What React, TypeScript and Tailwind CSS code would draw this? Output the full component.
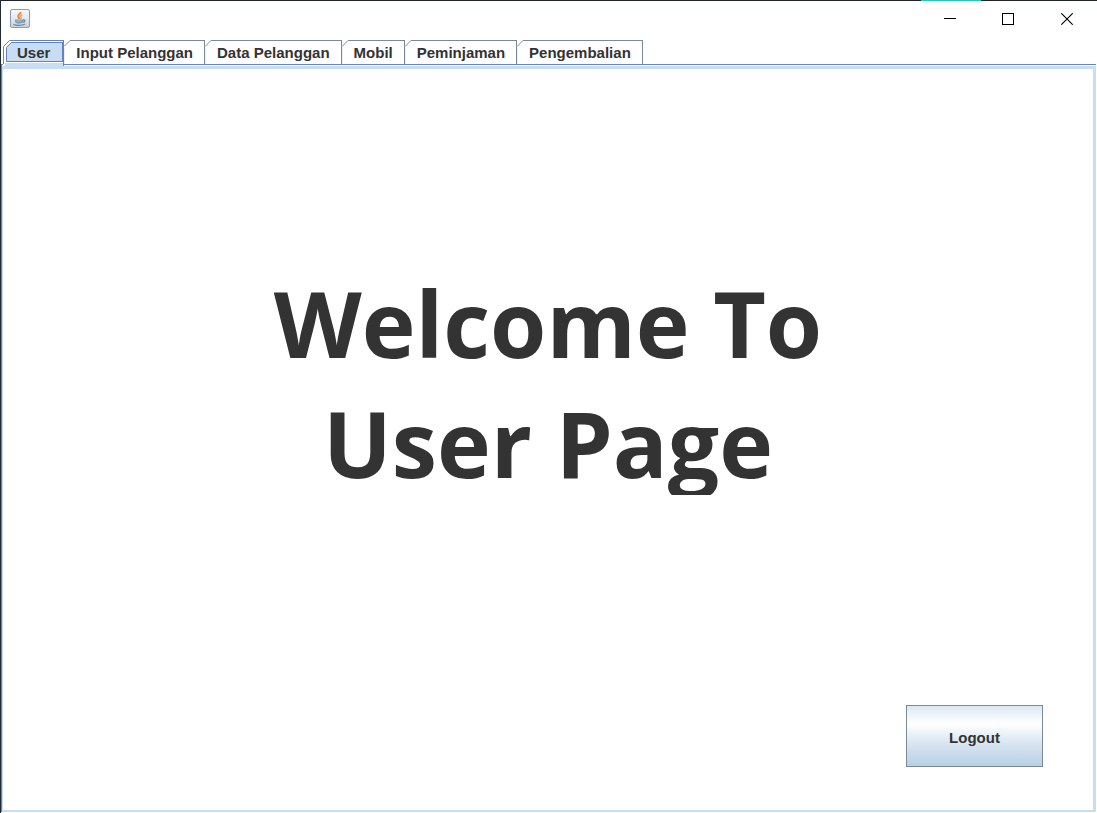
import { useState } from "react";

const tabs = ["User", "Input Pelanggan", "Data Pelanggan", "Mobil", "Peminjaman", "Pengembalian"];

function JavaIcon() {
  return (
    <svg width="20" height="20" viewBox="0 0 20 20" aria-hidden="true">
      <defs>
        <linearGradient id="tile" x1="0" y1="0" x2="0" y2="1">
          <stop offset="0" stopColor="#f6f8fa" />
          <stop offset="0.5" stopColor="#e4e9ee" />
          <stop offset="1" stopColor="#c5d0da" />
        </linearGradient>
      </defs>
      <rect x="0.5" y="0.5" width="19" height="18" rx="1.5" fill="url(#tile)" stroke="#8b9eae" />
      <path d="M10.500 3c.6 1.800-3 2.600-2.300 4.600.3.900 1.200 1.300 1.100 2.600" fill="none" stroke="#e8893c" strokeWidth="2" />
      <path d="M12.300 5.800c-1.800.7-2.600 1.400-1.400 2.600.5.600.1 1.100-.3 1.600" fill="none" stroke="#f0a468" strokeWidth="1.500" />
      <path d="M5 10.500h8v1.500c0 1.400-1 2.400-2.500 2.400h-3C6 14.400 5 13.400 5 12z" fill="#7d9bb3" />
      <path d="M6.500 12h5" stroke="#b4c8d8" />
      <path d="M13 11c2.500-.6 2.700 1.900-.3 2.300M3.500 15.300c2 1.500 9 1.500 11.500-.3" fill="none" stroke="#6887a1" strokeWidth="1.300" />
    </svg>
  );
}

function TitleBar() {
  return (
    <header className="flex h-9 items-center justify-between pl-[9px]">
      <JavaIcon />
      <div className="flex h-full">
        <button aria-label="Minimize" className="flex w-[58px] items-center justify-center">
          <svg width="12" height="12" viewBox="0 0 12 12" shapeRendering="crispEdges">
            <path d="M0 5.500h12" stroke="#000" />
          </svg>
        </button>
        <button aria-label="Maximize" className="flex w-[58px] items-center justify-center">
          <svg width="12" height="12" viewBox="0 0 12 12" shapeRendering="crispEdges">
            <path d="M.5.5h11v11H.5z" fill="none" stroke="#000" />
          </svg>
        </button>
        <button aria-label="Close" className="flex w-[60px] items-center justify-center">
          <svg width="12" height="12" viewBox="0 0 12 12">
            <path d="M.3.3l11.400 11.400M11.700.3L.3 11.700" stroke="#000" strokeWidth="1.100" />
          </svg>
        </button>
      </div>
    </header>
  );
}

function Tab({ label, selected, onSelect }: { label: string; selected: boolean; onSelect: () => void }) {
  if (selected) {
    return (
      <button role="tab" aria-selected="true" onClick={onSelect} className="relative z-10 flex h-[26px] text-[#333]">
        <svg width="8" height="26" viewBox="0 0 8 26" aria-hidden="true">
          <path d="M0 24h2v2H0z" fill="#fff" />
          <path d="M2 23h6v3H2z" fill="#c8ddf2" />
          <path d="M3.500 22V7.500L8 3v19z" fill="#c8ddf2" />
          <path d="M.5 24V6.500L6.500.5H8" fill="none" stroke="#6382bf" />
          <path d="M8 21.500H3.500v-14l5-5" fill="none" stroke="#6382bf" />
        </svg>
        <span className="flex h-full flex-col border-t border-r border-[#6382bf] bg-[#c8ddf2]">
          <span className="h-px bg-white" />
          <span className="flex h-5 items-center border-y border-r border-[#6382bf] pt-[2px] pr-3 pl-[6px] leading-4">{label}</span>
          <span className="h-px bg-white" />
        </span>
      </button>
    );
  }
  return (
    <button role="tab" aria-selected="false" onClick={onSelect} className="flex h-6 text-[#333]">
      <svg width="6" height="24" viewBox="0 0 6 24" aria-hidden="true">
        <path d="M0 6.500L6 .5" fill="none" stroke="#7a8a99" />
        <path d="M.5 8v16" stroke="#eeeeee" />
      </svg>
      <span className="flex h-full items-center border-t border-r border-[#7a8a99] pr-[11px] pl-[6px]">{label}</span>
    </button>
  );
}

export default function App() {
  const [active, setActive] = useState("User");
  return (
    <div className="flex min-h-screen flex-col border-l border-[#222c30] bg-white font-['Liberation_Sans',Arial,sans-serif] text-[15px] leading-5 font-bold text-[#333]">
      <div className="flex h-px justify-end bg-[#1d2426] pr-29">
        <span className="w-15 bg-[#2bc4c4]" />
      </div>
      <TitleBar />
      <div role="tablist" className="mt-[3px] flex h-6 pl-[2px]">
        {tabs.map((t) => (
          <Tab key={t} label={t} selected={t === active} onSelect={() => setActive(t)} />
        ))}
      </div>
      <div className="mr-px mb-px flex flex-1 flex-col border-t border-l border-[#6382bf]">
        <main className="mt-px flex flex-1 flex-col border-t-3 border-r-3 border-b-2 border-l border-[#c8ddf2] px-[50px] pt-[194px] pb-[43px]">
          <h1 className="h-[232px] overflow-hidden text-center font-['Open_Sans','Noto_Sans',sans-serif] text-[91px] leading-[120px]">
            Welcome To
            <br />
            User Page
          </h1>
          <button className="mt-auto h-[62px] w-[137px] self-end border border-[#7a8a99] bg-[linear-gradient(to_bottom,#dde8f3_0%,#ffffff_30%,#dbe7f2_60%,#b8cfe5_100%)] pt-[3px]">
            Logout
          </button>
        </main>
      </div>
    </div>
  );
}
